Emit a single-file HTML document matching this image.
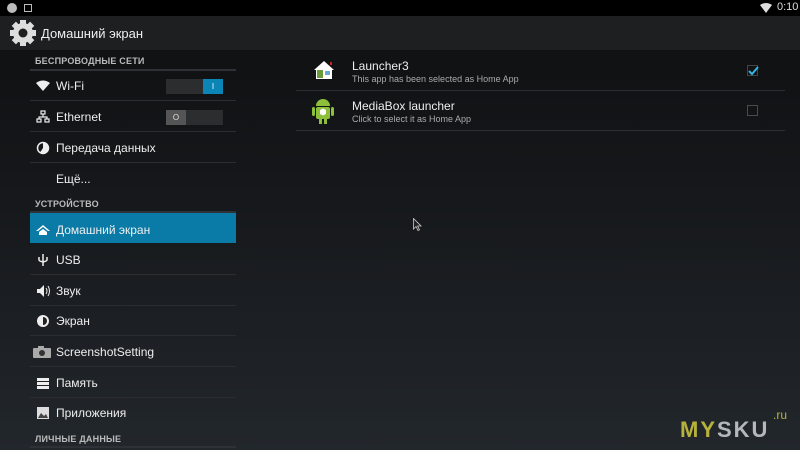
<!DOCTYPE html>
<html><head><meta charset="utf-8"><style>
*{margin:0;padding:0;box-sizing:border-box}
body{width:800px;height:450px;overflow:hidden;font-family:"Liberation Sans",sans-serif;color:#e8e8e8;position:relative;
background:linear-gradient(180deg,#0e0f10 0%,#15171a 40%,#22272c 100%)}
.sb{position:absolute;left:0;top:0;width:800px;height:16px;background:#000}
.ab{position:absolute;left:0;top:16px;width:800px;height:34px;background:#1e1f20}
.ab span{position:absolute;left:41px;top:10px;font-size:13px;color:#eee}
.hdr{position:absolute;left:35px;font-size:9px;font-weight:bold;color:#bbb;letter-spacing:.2px}
.hl{position:absolute;left:30px;width:206px;height:2px;background:#2e3236}
.row{position:absolute;left:30px;width:206px;height:30px;border-bottom:1px solid #2a2d31}
.row span{position:absolute;left:26px;top:8px;font-size:12px;color:#eee}
.ic{position:absolute;left:6px;top:8px;width:14px;height:14px}
.sel{background:#0a7aa6;border-bottom:none}
.tg{position:absolute;left:136px;top:8px;width:57px;height:15px;background:#2c2d2f}
.r{position:absolute;left:296px;width:489px;border-bottom:1px solid #2b2e31}
.t1{position:absolute;left:56px;font-size:12px;color:#eee}
.t2{position:absolute;left:56px;font-size:9px;color:#aaa}
.cb{position:absolute;left:451px;width:11px;height:11px;border:1px solid #555}
</style></head><body>
<div class="sb">
<div style="position:absolute;left:7px;top:3px;width:10px;height:10px;border-radius:50%;background:#bbb"></div>
<div style="position:absolute;left:24px;top:4px;width:8px;height:8px;border:1px solid #bbb"></div>
<svg style="position:absolute;left:760px;top:3px" width="12" height="10" viewBox="0 0 12 10"><path d="M0 2 Q6 -2 12 2 L6 10Z" fill="#ddd"/></svg>
<div style="position:absolute;left:777px;top:1px;font-size:11px;color:#ddd">0:10</div>
</div>
<div class="ab">
<svg style="position:absolute;left:9px;top:3px" width="28" height="28" viewBox="0 0 28 28"><g fill="#ddd"><circle cx="14" cy="14" r="10"/><g><rect x="11" y="1" width="6" height="26"/><rect x="1" y="11" width="26" height="6"/><rect x="11" y="1" width="6" height="26" transform="rotate(45 14 14)"/><rect x="11" y="1" width="6" height="26" transform="rotate(-45 14 14)"/></g></g><circle cx="14" cy="14" r="4.5" fill="#1e1f20"/></svg>
<span>Домашний экран</span></div>

<div class="hdr" style="top:56px">БЕСПРОВОДНЫЕ СЕТИ</div>
<div class="hl" style="top:69px"></div>
<div class="row" style="top:71px"><svg class="ic" viewBox="0 0 14 14"><path d="M0 4 Q7 -1 14 4 L7 12Z" fill="#eee"/></svg><span>Wi-Fi</span><div class="tg"><div style="position:absolute;right:0;top:0;width:20px;height:15px;background:#0a85b6;color:#fff;font-size:8px;text-align:center;line-height:15px">I</div></div></div>
<div class="row" style="top:102px"><svg class="ic" viewBox="0 0 14 14"><g fill="none" stroke="#eee" stroke-width="1.2"><rect x="5" y="1" width="4" height="3"/><rect x="1" y="9" width="4" height="3"/><rect x="9" y="9" width="4" height="3"/><path d="M7 4V7M3 9V7H11V9"/></g></svg><span>Ethernet</span><div class="tg"><div style="position:absolute;left:0;top:0;width:20px;height:15px;background:#555;color:#ddd;font-size:8px;text-align:center;line-height:15px">O</div></div></div>
<div class="row" style="top:133px"><svg class="ic" viewBox="0 0 14 14"><circle cx="7" cy="7" r="5.5" fill="none" stroke="#eee" stroke-width="1.5"/><path d="M7 7V1.5A5.5 5.5 0 0 1 12.5 7Z M7 7L12.5 7A5.5 5.5 0 0 1 4 11.5Z" fill="#eee"/></svg><span>Передача данных</span></div>
<div class="row" style="top:164px;border-bottom:none"><span>Ещё...</span></div>
<div class="hdr" style="top:199px">УСТРОЙСТВО</div>
<div class="hl" style="top:211px"></div>
<div class="row sel" style="top:213px"><svg class="ic" style="top:10px" viewBox="0 0 14 14"><path d="M0 8 L7 2 L14 8 L12 8 L7 4 L2 8Z M3 9 L7 6 L11 9 V12 H3Z" fill="#fff"/></svg><span style="top:10px">Домашний экран</span></div>
<div class="row" style="top:245px"><svg class="ic" viewBox="0 0 14 14"><path d="M7 1V13M3 4V7Q3 8 7 9Q11 8 11 7V4" fill="none" stroke="#eee" stroke-width="1.5"/></svg><span>USB</span></div>
<div class="row" style="top:276px"><svg class="ic" viewBox="0 0 14 14"><path d="M1 5H4L8 1V13L4 9H1Z" fill="#eee"/><path d="M10 4Q12 7 10 10M12 2Q15 7 12 12" stroke="#eee" fill="none"/></svg><span>Звук</span></div>
<div class="row" style="top:306px"><svg class="ic" viewBox="0 0 14 14"><circle cx="7" cy="7" r="6" fill="#eee"/><path d="M7 3A4 4 0 0 1 7 11Z" fill="#222"/></svg><span>Экран</span></div>
<div class="row" style="top:337px"><svg class="ic" style="left:3px;width:18px" viewBox="0 0 18 14"><rect x="0" y="3" width="18" height="10" rx="1" fill="#aaa"/><rect x="5" y="1" width="6" height="3" fill="#aaa"/><circle cx="9" cy="8" r="3" fill="#333"/></svg><span>ScreenshotSetting</span></div>
<div class="row" style="top:368px"><svg class="ic" viewBox="0 0 14 14"><g fill="#eee"><rect x="1" y="2" width="12" height="3"/><rect x="1" y="6" width="12" height="3"/><rect x="1" y="10" width="12" height="3"/></g></svg><span>Память</span></div>
<div class="row" style="top:398px;border-bottom:none"><svg class="ic" viewBox="0 0 14 14"><rect x="1" y="1" width="12" height="12" fill="#ddd"/><path d="M2 12L5 7L8 10L10 8L12 12Z" fill="#444"/></svg><span>Приложения</span></div>
<div class="hdr" style="top:434px">ЛИЧНЫЕ ДАННЫЕ</div>
<div class="hl" style="top:446px"></div>

<div class="r" style="top:52px;height:39px">
<svg style="position:absolute;left:17px;top:8px" width="22" height="20" viewBox="0 0 22 20"><path d="M1 10L11 1L21 10Z" fill="#fff"/><rect x="3" y="9" width="16" height="10" fill="#fff"/><rect x="4" y="10" width="6" height="8" fill="#6a9a3a"/><rect x="12" y="11" width="5" height="4" fill="#6aa6d6"/><rect x="17" y="2" width="2" height="3" fill="#c22"/></svg>
<div class="t1" style="top:7px">Launcher3</div><div class="t2" style="top:22px">This app has been selected as Home App</div>
<div class="cb" style="top:13px;border-color:#444"><svg style="position:absolute;left:0;top:-1px" width="11" height="11" viewBox="0 0 11 11"><path d="M1 6L4 9L10 2" stroke="#33b5e5" stroke-width="2" fill="none"/></svg></div>
</div>
<div class="r" style="top:91px;height:40px">
<svg style="position:absolute;left:15px;top:5px" width="24" height="30" viewBox="0 0 24 30"><g fill="#8cbf3a"><path d="M5 10A7 7 0 0 1 19 10Z"/><rect x="5" y="11" width="14" height="12" rx="2"/><rect x="1" y="11" width="3" height="9" rx="1.5"/><rect x="20" y="11" width="3" height="9" rx="1.5"/><rect x="8" y="22" width="3" height="6"/><rect x="13" y="22" width="3" height="6"/></g><path d="M9 14L12 12.5L15 14V18L12 19.5L9 18Z" fill="#fff"/></svg>
<div class="t1" style="top:8px">MediaBox launcher</div><div class="t2" style="top:23px">Click to select it as Home App</div>
<div class="cb" style="top:14px;border-color:#4a4a4a"></div>
</div>

<svg style="position:absolute;left:413px;top:218px" width="9" height="13" viewBox="0 0 9 13"><path d="M0.5 0.5V11L3 8.5L5 12.5L6.5 11.8L4.6 8H8Z" fill="#222" stroke="#ccc" stroke-width="0.8"/></svg>
<div style="position:absolute;left:680px;top:417px;font-size:22px;font-weight:bold;letter-spacing:2px"><span style="color:#b7b33a">MY</span><span style="color:#b5b8bb">SKU</span></div>
<div style="position:absolute;left:773px;top:408px;font-size:12px;color:#b7b33a">.ru</div>
</body></html>
